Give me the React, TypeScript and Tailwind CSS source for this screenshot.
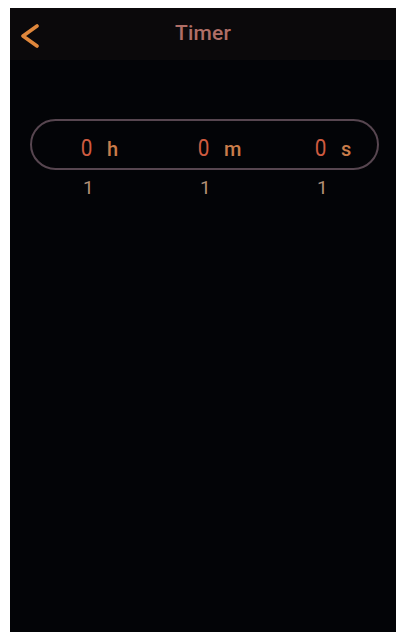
import React from 'react';

const units = [
  { value: '0', unit: 'h', below: '1' },
  { value: '0', unit: 'm', below: '1' },
  { value: '0', unit: 's', below: '1' },
];

export default function App() {
  return (
    <div className="w-[401px] h-[634px] bg-white pt-[8px] pl-[10px] pr-[5px] pb-[2px] font-['Roboto',sans-serif]">
      <div className="w-full h-full bg-[#030407] flex flex-col">
        {/* Header */}
        <div className="relative h-[52px] bg-[#0b090b] flex items-center justify-center shrink-0">
          <button className="absolute left-[7px] top-[15px] w-[26px] h-[26px] flex items-center justify-center">
            <svg width="20" height="24" viewBox="0 0 20 24" fill="none">
              <path d="M17 2 L3 12 L17 22" stroke="#e0873c" strokeWidth="3.6" strokeLinecap="round" strokeLinejoin="round" />
            </svg>
          </button>
          <span className="text-[21px] font-medium text-[#b06e66] tracking-[0.2px]">Timer</span>
        </div>

        {/* Time picker */}
        <div className="mt-[59px] ml-[20px] w-[349px] h-[51px] rounded-full border-2 border-[#574650] grid grid-cols-[117px_117px_100px] pl-[48px] items-center">
          {units.map((u) => (
            <div key={u.unit} className="flex items-baseline pt-[8px]">
              <span className="inline-block scale-x-90 text-[23px] leading-none text-[#cf5b40]">{u.value}</span>
              <span className="ml-[14px] text-[20px] font-medium leading-none text-[#c97c4a]">{u.unit}</span>
            </div>
          ))}
        </div>
        <div className="ml-[20px] w-[349px] grid grid-cols-[117px_117px_100px] pl-[53px] pt-[8px]">
          {units.map((u) => (
            <span key={u.unit} className="text-[19px] leading-none text-[#b39078]">{u.below}</span>
          ))}
        </div>
      </div>
    </div>
  );
}
